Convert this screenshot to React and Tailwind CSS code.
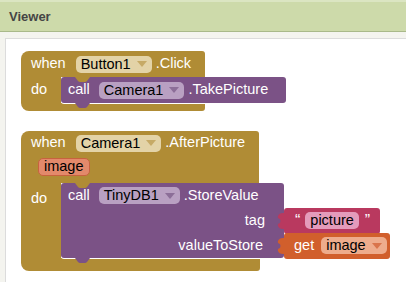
const font = { fontFamily: '"Liberation Sans", Arial, sans-serif' };

const Caret = ({ color }) => (
  <svg width="10" height="6" viewBox="0 0 10 6" className="ml-[6px]">
    <path d="M0 0 L10 0 L5 6 Z" fill={color} />
  </svg>
);

const Pill = ({ children, bg, caret, className = "" }) => (
  <div
    className={`flex items-center h-[17px] rounded-[5px] px-[5px] text-[14.5px] text-black leading-none ${bg} ${className}`}
  >
    {children}
    {caret && <Caret color={caret} />}
  </div>
);

// little bump for statement connections
const Tab = ({ color, className = "" }) => (
  <svg width="15" height="5" viewBox="0 0 15 5" className={`absolute ${className}`}>
    <path d="M0 0 L3 4 Q4 5 5 5 L10 5 Q11 5 12 4 L15 0 Z" fill={color} />
  </svg>
);

// output connector on the left of a value block
const Plug = ({ color }) => (
  <svg width="8" height="16" viewBox="0 0 8 16" className="absolute left-[-7px] top-[5px]">
    <path d="M8 0 L8 16 L6 16 Q2 16 1 13 Q0 11 3 10 Q4 8 3 6 Q0 5 1 3 Q2 0 6 0 Z" fill={color} />
  </svg>
);

const Gold = "bg-[#b08c35]";
const Purple = "bg-[#7b5286]";

export default function App() {
  return (
    <div className="w-[406px] h-[282px] overflow-hidden bg-[#f4f4ef]" style={font}>
      <div className="h-[32px] bg-[#cddaaa] border-t-2 border-[#dbe5c2] border-b border-b-[#a9b98a] flex items-center pl-[9px]">
        <span className="text-[13px] font-bold text-[#454545]">Viewer</span>
      </div>
      <div className="ml-[5px] mt-[6px] h-[250px] bg-white border border-[#dcdcdc] border-r-0 pt-[12px] pl-[15px] text-white text-[14.5px]">
        {/* when Button1.Click */}
        <div className="flex flex-col items-start">
          <div className={`w-[184px] h-[26px] ${Gold} rounded-tl-[8px] rounded-tr-[3px] flex items-center pl-[10px]`}>
            <span>when</span>
            <Pill bg="bg-[#e3d3a7]" caret="#c6aa66" className="ml-[10px]">Button1</Pill>
            <span className="ml-[4px]">.Click</span>
          </div>
          <div className="flex">
            <div className={`w-[40px] ${Gold} flex items-center pl-[10px]`}>do</div>
            <div className={`relative w-[225px] h-[26px] ${Purple} rounded-[3px] flex items-center pl-[7px] shadow-[0_1px_0_#fff]`}>
              <Tab color="#b08c35" className="left-[14px] top-0" />
              <span>call</span>
              <Pill bg="bg-[#b9a0c2]" caret="#8c6e98" className="ml-[9px]">Camera1</Pill>
              <span className="ml-[4px]">.TakePicture</span>
              <Tab color="#7b5286" className="left-[14px] bottom-[-5px]" />
            </div>
          </div>
          <div className={`w-[184px] h-[8px] ${Gold} rounded-bl-[8px] rounded-br-[3px]`} />
        </div>

        {/* when Camera1.AfterPicture */}
        <div className="flex flex-col items-start mt-[20px]">
          <div className={`w-[238px] ${Gold} rounded-tl-[8px] rounded-tr-[3px] pl-[10px] pb-[5px]`}>
            <div className="h-[24px] flex items-center">
              <span>when</span>
              <Pill bg="bg-[#e3d3a7]" caret="#c6aa66" className="ml-[10px]">Camera1</Pill>
              <span className="ml-[4px]">.AfterPicture</span>
            </div>
            <div className="h-[23px] flex items-center pl-[7px]">
              <Pill bg="bg-[#e3896b]" className="border border-[#c7623f] h-[18px]">image</Pill>
            </div>
          </div>
          <div className="flex">
            <div className={`w-[40px] ${Gold} pl-[10px] pt-[5px]`}>do</div>
            <div className={`relative w-[223px] ${Purple} rounded-[3px] shadow-[0_1px_0_#fff]`}>
              <Tab color="#b08c35" className="left-[14px] top-0" />
              <div className="h-[25px] flex items-center pl-[7px]">
                <span>call</span>
                <Pill bg="bg-[#b9a0c2]" caret="#8c6e98" className="ml-[9px]">TinyDB1</Pill>
                <span className="ml-[4px]">.StoreValue</span>
              </div>
              <div className="h-[25px] flex items-center justify-end">
                <span className="mr-[19px]">tag</span>
                <div className="relative mr-[-96px] w-[96px] h-[26px] bg-[#b9395f] rounded-[3px] flex items-center pl-[11px]">
                  <Plug color="#b9395f" />
                  <span className="text-[16px]">“</span>
                  <Pill bg="bg-[#e49bbb]" className="ml-[5px]">picture</Pill>
                  <span className="ml-[6px] text-[16px]">”</span>
                </div>
              </div>
              <div className="h-[25px] flex items-center justify-end">
                <span className="mr-[21px]">valueToStore</span>
                <div className="relative mr-[-106px] w-[106px] h-[26px] bg-[#d15f2c] rounded-[3px] flex items-center pl-[10px]">
                  <Plug color="#d15f2c" />
                  <span>get</span>
                  <Pill bg="bg-[#eeac8c]" caret="#d9744b" className="ml-[7px]">image</Pill>
                </div>
              </div>
              <Tab color="#7b5286" className="left-[14px] bottom-[-5px]" />
            </div>
          </div>
          <div className={`w-[239px] h-[13px] ${Gold} rounded-bl-[8px] rounded-br-[3px]`} />
        </div>
      </div>
    </div>
  );
}
